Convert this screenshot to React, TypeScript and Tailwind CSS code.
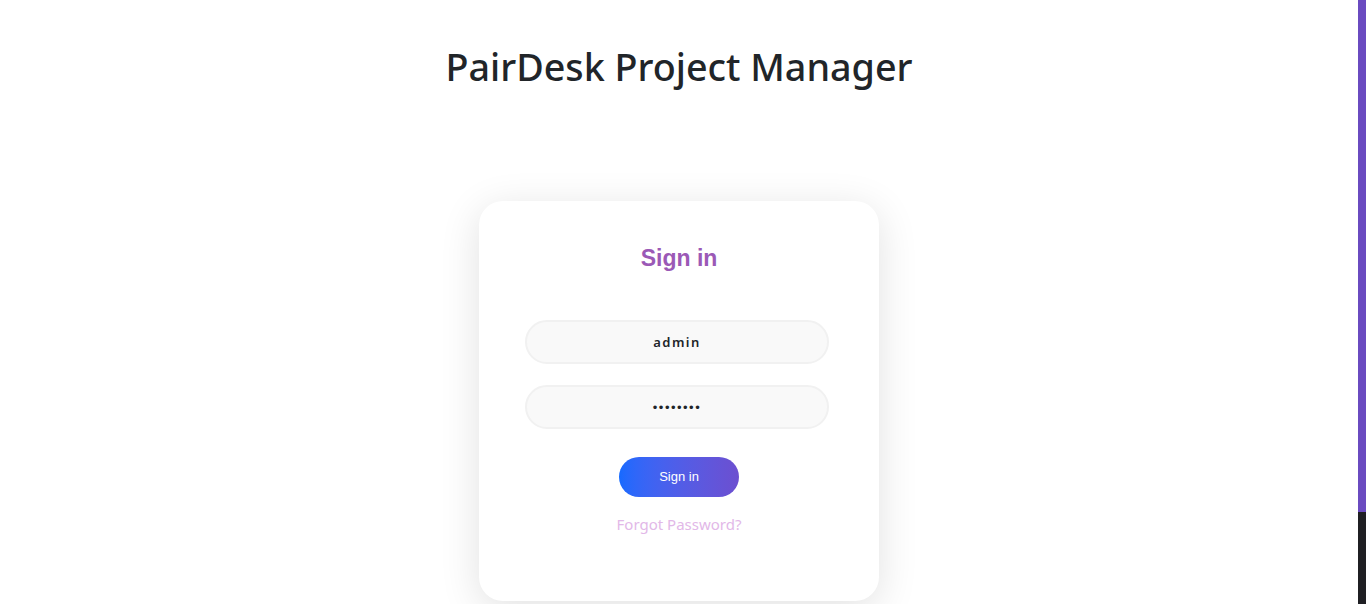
export default function App() {
  return (
    <div className="flex h-screen w-full overflow-hidden bg-white">
      <main className="flex-1 flex flex-col items-center pt-[43px]">
        <h1 className="text-[37.7px] leading-[48px] font-medium text-[#212529] font-['Noto_Sans',sans-serif]">
          PairDesk Project Manager
        </h1>

        <div className="mt-[110px] w-[400px] h-[400px] shrink-0 bg-white rounded-[24px] shadow-[0_8px_40px_rgba(0,0,0,0.12)] flex flex-col items-center pt-[44px]">
          <h2 className="text-[23px] leading-[26px] font-bold text-[#9b59b6] font-['Liberation_Sans',Arial,sans-serif]">
            Sign in
          </h2>

          <form className="mt-[49px] flex flex-col items-center">
            <input
              type="text"
              defaultValue="admin"
              className="mr-[4px] w-[304px] h-[44px] rounded-full bg-[#f9f9f9] border-2 border-[#f1f1f1] text-center text-[13px] font-semibold tracking-[1.5px] text-[#212529] outline-none font-['Noto_Sans',sans-serif]"
            />
            <input
              type="password"
              defaultValue="password"
              className="mr-[4px] mt-[21px] w-[304px] h-[44px] rounded-full bg-[#f9f9f9] border-2 border-[#f1f1f1] text-center text-[13px] tracking-[1.5px] text-[#212529] outline-none font-['Liberation_Sans',Arial,sans-serif]"
            />
            <button
              type="button"
              className="mt-[28px] w-[120px] h-[40px] rounded-full bg-gradient-to-r from-[#156aff] to-[#6c4fd0] text-white text-[13px] font-['Liberation_Sans',Arial,sans-serif]"
            >
              Sign in
            </button>
            <a
              href="#"
              className="mt-[17px] text-[15px] leading-[20px] text-[#e2b8e8] font-['Noto_Sans',sans-serif]"
            >
              Forgot Password?
            </a>
          </form>
        </div>
      </main>

      {/* scrollbar strip */}
      <div className="w-[8px] h-full flex flex-col shrink-0">
        <div className="h-[512px] bg-[#6a4bc0]" />
        <div className="flex-1 bg-[#1f1f23]" />
      </div>
    </div>
  )
}
